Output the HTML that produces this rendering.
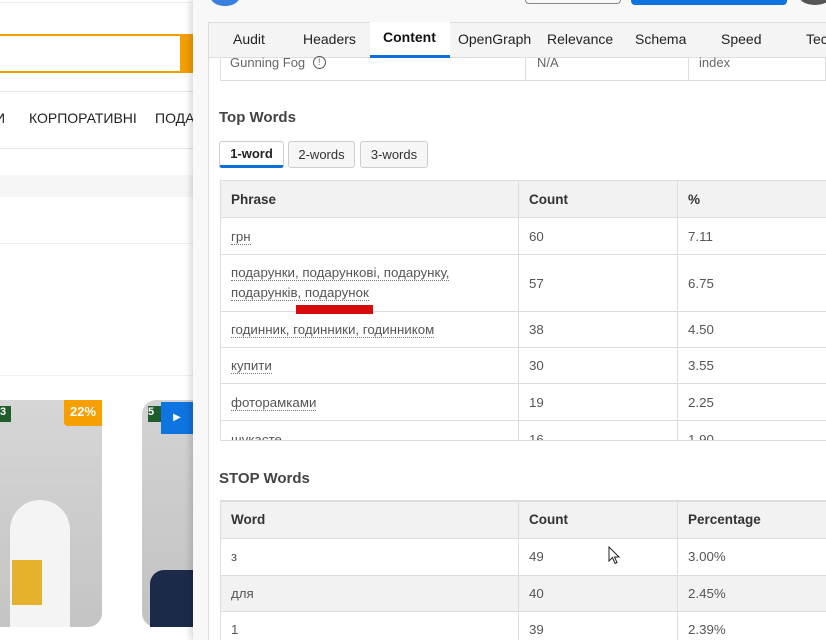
<!DOCTYPE html>
<html><head><meta charset="utf-8"><style>
*{box-sizing:border-box;margin:0;padding:0}
html,body{width:826px;height:640px;overflow:hidden}
body{position:relative;background:#fff;font-family:"Liberation Sans","DejaVu Sans",sans-serif;}
.abs{position:absolute}
.t{font-size:13px;color:#444}
td,th{font-size:13.3px;color:#555;text-align:left;padding-left:10px;border:1px solid #ddd;font-weight:normal}
th{background:#f2f2f2;color:#333;font-weight:bold;font-size:13.5px}
table{border-collapse:collapse;position:absolute;left:220px;width:640px;table-layout:fixed}
.u{border-bottom:1px dotted #777}
</style></head><body>
<div class="abs" style="left:0;top:2px;width:193px;height:1px;background:#eee"></div>
<div class="abs" style="left:0;top:34px;width:182px;height:39px;border:2px solid #f59e00;border-left:none"></div>
<div class="abs" style="left:182px;top:34px;width:11px;height:39px;background:#f59e00"></div>
<div class="abs" style="left:0;top:91px;width:193px;height:1px;background:#e6e6e6"></div>
<div class="abs" style="left:-5px;top:110px;font-size:14px;color:#222;white-space:nowrap">И</div>
<div class="abs" style="left:29px;top:110px;font-size:14px;color:#222;white-space:nowrap">КОРПОРАТИВНІ</div>
<div class="abs" style="left:155px;top:110px;font-size:14px;color:#222;white-space:nowrap">ПОДА</div>
<div class="abs" style="left:0;top:148px;width:193px;height:1px;background:#e6e6e6"></div>
<div class="abs" style="left:0;top:175px;width:193px;height:22px;background:#f6f6f6"></div>
<div class="abs" style="left:0;top:243px;width:193px;height:1px;background:#eee"></div>
<div class="abs" style="left:0;top:375px;width:193px;height:1px;background:#eee"></div>
<div class="abs" style="left:0;top:400px;width:102px;height:227px;background:linear-gradient(#d6d6d6,#c4c4c4);border-radius:0 0 14px 0"></div>
<div class="abs" style="left:10px;top:500px;width:60px;height:127px;background:#f4f4f4;border-radius:30px 30px 0 0"></div>
<div class="abs" style="left:12px;top:560px;width:30px;height:45px;background:#e6b22e"></div>
<div class="abs" style="left:0;top:406px;width:11px;height:16px;background:#1f5e2a;color:#fff;font-size:11px;font-weight:bold">3</div>
<div class="abs" style="left:64px;top:400px;width:38px;height:26px;background:#f5a000;color:#fff;font-size:13px;font-weight:bold;text-align:center;line-height:24px;border-radius:0 0 0 4px">22%</div>
<div class="abs" style="left:142px;top:400px;width:51px;height:227px;background:linear-gradient(#d3d3d3,#c2c2c2);border-radius:14px 0 0 14px"></div>
<div class="abs" style="left:148px;top:406px;width:14px;height:16px;background:#1f5e2a;color:#fff;font-size:11px;font-weight:bold">5</div>
<div class="abs" style="left:161px;top:402px;width:32px;height:32px;background:#0d74e0;color:#fff;font-size:10px;text-align:center;line-height:32px">▶</div>
<div class="abs" style="left:150px;top:570px;width:43px;height:57px;background:#1c2a4a;border-radius:14px 0 0 0"></div>
<div class="abs" style="left:193px;top:0;width:633px;height:640px;background:#f8f8f8;box-shadow:-3px 0 6px rgba(0,0,0,.15)"></div>
<div class="abs" style="left:210px;top:-14px;width:30px;height:20px;border-radius:50%;background:#3b7fe0"></div>
<div class="abs" style="left:525px;top:-10px;width:96px;height:14px;border:1px solid #888;border-radius:4px"></div>
<div class="abs" style="left:631px;top:-10px;width:156px;height:15px;background:#0d74e0;border-radius:4px"></div>
<div class="abs" style="left:800px;top:-10px;width:30px;height:15px;background:#555;border-radius:50%"></div>
<div class="abs" style="left:208px;top:22px;width:618px;height:618px;background:#fff;border-left:1px solid #ddd"></div>
<div class="abs" style="left:209px;top:22px;width:617px;height:36px;background:#f4f4f4;border-top:1px solid #ddd;border-bottom:1px solid #ddd"></div>
<div class="abs" style="left:370px;top:22px;width:80px;height:36px;background:#fff;border-bottom:3px solid #0d6fd8"></div>
<div class="abs t" style="top:31px;left:233px;font-size:14px;color:#222">Audit</div>
<div class="abs t" style="top:31px;left:303px;font-size:14px;color:#222">Headers</div>
<div class="abs t" style="top:29px;left:383px;font-size:14px;color:#111;font-weight:bold">Content</div>
<div class="abs t" style="top:31px;left:458px;font-size:14px;color:#222">OpenGraph</div>
<div class="abs t" style="top:31px;left:547px;font-size:14px;color:#222">Relevance</div>
<div class="abs t" style="top:31px;left:635px;font-size:14px;color:#222">Schema</div>
<div class="abs t" style="top:31px;left:721px;font-size:14px;color:#222">Speed</div>
<div class="abs t" style="top:31px;left:806px;font-size:14px;color:#222">Tec</div>
<div class="abs" style="left:220px;top:58px;width:606px;height:23px;border:1px solid #ddd;border-top:none"></div>
<div class="abs" style="left:525px;top:58px;width:1px;height:23px;background:#ddd"></div>
<div class="abs" style="left:688px;top:58px;width:1px;height:23px;background:#ddd"></div>
<div class="abs t" style="left:230px;top:55px;color:#666">Gunning Fog <span style="display:inline-block;width:13px;height:13px;border:1px solid #555;border-radius:50%;font-size:9px;text-align:center;line-height:11px;margin-left:4px;vertical-align:2px">!</span></div>
<div class="abs t" style="left:537px;top:55px;color:#666">N/A</div>
<div class="abs t" style="left:699px;top:55px;color:#666">index</div>
<div class="abs" style="left:219px;top:109px;font-size:15px;font-weight:bold;color:#444">Top Words</div>
<div class="abs" style="left:219px;top:141px;width:65px;height:27px;border:1px solid #ccc;border-radius:3px;border-bottom:3px solid #0d6fd8;font-size:13px;font-weight:bold;text-align:center;line-height:24px;color:#222">1-word</div>
<div class="abs" style="left:288px;top:141px;width:67px;height:27px;border:1px solid #ccc;border-radius:3px;background:#f6f6f6;font-size:13px;text-align:center;line-height:25px;color:#333">2-words</div>
<div class="abs" style="left:360px;top:141px;width:68px;height:27px;border:1px solid #ccc;border-radius:3px;background:#f6f6f6;font-size:13px;text-align:center;line-height:25px;color:#333">3-words</div>
<div class="abs" style="left:220px;top:180px;width:620px;height:261px;overflow:hidden;border-bottom:1px solid #ddd">
<table style="left:0;top:0;width:640px">
<colgroup><col style="width:298px"><col style="width:159px"><col></colgroup>
<tr style="height:37px"><th>Phrase</th><th>Count</th><th>%</th></tr>
<tr style="height:37px"><td><span class="u">грн</span></td><td>60</td><td>7.11</td></tr>
<tr style="height:57px"><td style="line-height:20px"><span class="u">подарунки, подарункові, подарунку,</span><br><span class="u">подарунків, подарунок</span></td><td>57</td><td>6.75</td></tr>
<tr style="height:36px"><td><span class="u">годинник, годинники, годинником</span></td><td>38</td><td>4.50</td></tr>
<tr style="height:36px"><td><span class="u">купити</span></td><td>30</td><td>3.55</td></tr>
<tr style="height:37px"><td><span class="u">фоторамками</span></td><td>19</td><td>2.25</td></tr>
<tr style="height:37px"><td><span class="u">шукаєте</span></td><td>16</td><td>1.90</td></tr>
</table></div>
<div class="abs" style="left:296px;top:305px;width:77px;height:9px;background:#d70a0a"></div>
<div class="abs" style="left:219px;top:470px;font-size:15px;font-weight:bold;color:#444">STOP Words</div>
<table style="top:500px">
<colgroup><col style="width:298px"><col style="width:159px"><col></colgroup>
<tr style="height:37px;border-top:2px solid #ddd"><th>Word</th><th>Count</th><th>Percentage</th></tr>
<tr style="height:37px"><td>з</td><td>49</td><td>3.00%</td></tr>
<tr style="height:36px;background:#f2f2f2"><td>для</td><td>40</td><td>2.45%</td></tr>
<tr style="height:37px"><td>1</td><td>39</td><td>2.39%</td></tr>
</table>
<svg class="abs" style="left:608px;top:546px" width="14" height="20" viewBox="0 0 14 20"><path d="M1 1 L1 15 L4.5 11.5 L7 17.5 L9 16.5 L6.5 11 L11 11 Z" fill="#fff" stroke="#222" stroke-width="1"/></svg>
</body></html>
